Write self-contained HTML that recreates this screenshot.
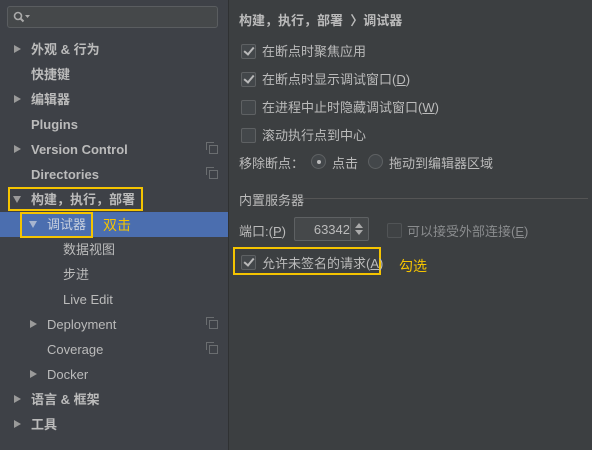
<!DOCTYPE html><html><head><meta charset="utf-8"><style>
body{margin:0;width:592px;height:450px;background:#3c3f41;font-family:"Liberation Sans","Noto Sans CJK SC",sans-serif;font-size:13px;color:#bbbbbb;position:relative;overflow:hidden}
.a{position:absolute;white-space:nowrap}
#left{position:absolute;left:0;top:0;width:228px;height:450px;background:#3e4147}
#div{position:absolute;left:228px;top:0;width:1px;height:450px;background:#2f3133}
.r{position:absolute;left:0;width:228px;height:25px;line-height:25px}
.b{font-weight:bold}
.tri{position:absolute;width:0;height:0;border-top:4.5px solid transparent;border-bottom:4.5px solid transparent;border-left:7px solid #9a9a9a;top:8px}
.dn{position:absolute;width:0;height:0;border-left:4.5px solid transparent;border-right:4.5px solid transparent;border-top:7px solid #9a9a9a;top:9px}
.cp{position:absolute;left:209px;top:8px;width:7px;height:7px;border:1px solid #6a6d70}
.cp:after{content:"";position:absolute;left:-4px;top:-4px;width:7px;height:7px;border-left:1px solid #6a6d70;border-top:1px solid #6a6d70}
.cb{position:absolute;width:13px;height:13px;border:1px solid #5e6163;background:#43474a;border-radius:2px}
.cb.c:after{content:"";position:absolute;left:4px;top:0px;width:4px;height:8px;border-right:2px solid #b9b9b9;border-bottom:2px solid #b9b9b9;transform:rotate(40deg)}
.y{border:2px solid #f5c400;position:absolute;box-sizing:border-box}
.yt{color:#f5c400;position:absolute;font-size:14px}
u{text-decoration:underline}
</style></head><body>
<div id="left">
<div class="a" style="left:7px;top:6px;width:211px;height:22px;border:1px solid #5a5d60;border-radius:3px;background:#45484a;box-sizing:border-box"></div>
<svg class="a" style="left:13px;top:11px" width="20" height="12"><circle cx="5" cy="5" r="3.5" fill="none" stroke="#aaa" stroke-width="1.6"/><line x1="7.5" y1="7.5" x2="10.5" y2="10.5" stroke="#aaa" stroke-width="2"/><path d="M12 4h5l-2.5 3z" fill="#aaa"/></svg>
<div class="r b" style="top:37px"><div class="tri" style="left:14px"></div><span class="a" style="left:31px">外观 &amp; 行为</span></div>
<div class="r b" style="top:62px"><span class="a" style="left:31px">快捷键</span></div>
<div class="r b" style="top:87px"><div class="tri" style="left:14px"></div><span class="a" style="left:31px">编辑器</span></div>
<div class="r b" style="top:112px"><span class="a" style="left:31px">Plugins</span></div>
<div class="r b" style="top:137px"><div class="tri" style="left:14px"></div><span class="a" style="left:31px">Version Control</span><div class="cp"></div></div>
<div class="r b" style="top:162px"><span class="a" style="left:31px">Directories</span><div class="cp"></div></div>
<div class="r b" style="top:187px"><div class="dn" style="left:13px"></div><span class="a" style="left:31px">构建，执行，部署</span></div>
<div class="r" style="top:212px;background:#4b6eaf;width:229px"><div class="dn" style="left:29px;border-top-color:#a7b5cf"></div><span class="a" style="left:47px;color:#c9d1df">调试器</span></div>
<div class="r" style="top:237px"><span class="a" style="left:63px">数据视图</span></div>
<div class="r" style="top:262px"><span class="a" style="left:63px">步进</span></div>
<div class="r" style="top:287px"><span class="a" style="left:63px">Live Edit</span></div>
<div class="r" style="top:312px"><div class="tri" style="left:30px"></div><span class="a" style="left:47px">Deployment</span><div class="cp"></div></div>
<div class="r" style="top:337px"><span class="a" style="left:47px">Coverage</span><div class="cp"></div></div>
<div class="r" style="top:362px"><div class="tri" style="left:30px"></div><span class="a" style="left:47px">Docker</span></div>
<div class="r b" style="top:387px"><div class="tri" style="left:14px"></div><span class="a" style="left:31px">语言 &amp; 框架</span></div>
<div class="r b" style="top:412px"><div class="tri" style="left:14px"></div><span class="a" style="left:31px">工具</span></div>
</div>
<div id="div"></div>
<div class="y" style="left:8px;top:187px;width:135px;height:24px"></div>
<div class="y" style="left:20px;top:212px;width:73px;height:26px"></div>
<div class="yt" style="left:103px;top:215px">双击</div>

<div class="a b" style="left:239px;top:10px">构建，执行，部署 &nbsp;〉调试器</div>
<div class="cb c" style="left:241px;top:44px"></div><div class="a" style="left:262px;top:41px">在断点时聚焦应用</div>
<div class="cb c" style="left:241px;top:72px"></div><div class="a" style="left:262px;top:69px">在断点时显示调试窗口(<u>D</u>)</div>
<div class="cb" style="left:241px;top:100px"></div><div class="a" style="left:262px;top:97px">在进程中止时隐藏调试窗口(<u>W</u>)</div>
<div class="cb" style="left:241px;top:128px"></div><div class="a" style="left:262px;top:125px">滚动执行点到中心</div>
<div class="a" style="left:239px;top:153px">移除断点：</div>
<div class="a" style="left:311px;top:154px;width:13px;height:13px;border:1px solid #5e6163;border-radius:50%;background:#43474a"><div style="position:absolute;left:5px;top:5px;width:4px;height:4px;border-radius:50%;background:#bbb"></div></div>
<div class="a" style="left:332px;top:153px">点击</div>
<div class="a" style="left:368px;top:154px;width:13px;height:13px;border:1px solid #5e6163;border-radius:50%;background:#43474a"></div>
<div class="a" style="left:389px;top:153px">拖动到编辑器区域</div>
<div class="a" style="left:239px;top:190px">内置服务器</div>
<div class="a" style="left:302px;top:198px;width:286px;height:1px;background:#555"></div>
<div class="a" style="left:239px;top:221px">端口:(<u>P</u>)</div>
<div class="a" style="left:294px;top:217px;width:75px;height:24px;border:1px solid #5e6163;background:#45484a;border-radius:2px;box-sizing:border-box"><span class="a" style="right:18px;top:4px">63342</span><div class="a" style="left:55px;top:0;width:1px;height:22px;background:#5e6163"></div><svg class="a" style="left:58px;top:4px" width="12" height="14"><path d="M2 6l4-5 4 5z M2 8l4 5 4-5z" fill="#aaa"/></svg></div>
<div class="cb" style="left:387px;top:223px;border-color:#515456;background:#3f4244"></div><div class="a" style="left:407px;top:221px;color:#8a8c8e">可以接受外部连接(<u>E</u>)</div>
<div class="y" style="left:233px;top:247px;width:148px;height:28px"></div>
<div class="cb c" style="left:241px;top:255px"></div><div class="a" style="left:262px;top:253px">允许未签名的请求(<u>A</u>)</div>
<div class="yt" style="left:399px;top:256px">勾选</div>
</body></html>
